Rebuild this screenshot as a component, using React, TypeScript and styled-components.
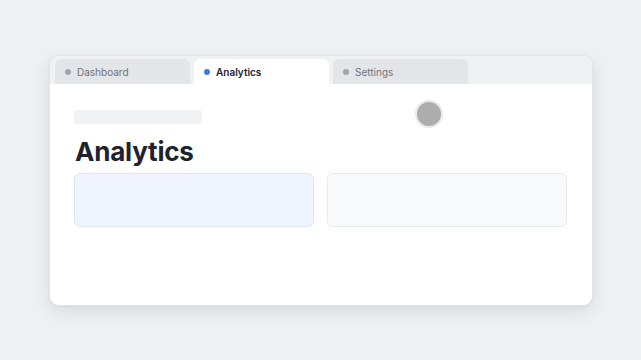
import styled, { createGlobalStyle } from 'styled-components'

const GlobalStyle = createGlobalStyle`
  html, body {
    margin: 0;
    padding: 0;
    background: #eff0f3;
  }
  body {
    font-family: 'Inter', 'Liberation Sans', sans-serif;
  }
`

const Page = styled.div`
  width: 641px;
  height: 360px;
  box-sizing: border-box;
  padding: 55px 0 0 49px;
  display: flex;
  align-items: flex-start;
`

const Window = styled.div`
  position: relative;
  width: 544px;
  height: 251px;
  background: #ffffff;
  border: 1px solid #e3e4e7;
  box-sizing: border-box;
  border-radius: 10px;
  box-shadow: 0 6px 18px rgba(20, 24, 40, 0.09), 0 1px 3px rgba(20, 24, 40, 0.05);
  overflow: hidden;
  display: flex;
  flex-direction: column;
`

const TabBar = styled.div`
  display: flex;
  gap: 4px;
  padding: 3px 6px 0 5px;
  background: #f0f1f3;
  height: 28px;
  box-sizing: border-box;
`

const Tab = styled.div<{ $active?: boolean }>`
  width: 135px;
  height: 25px;
  display: flex;
  align-items: center;
  gap: 6px;
  padding-left: 10px;
  box-sizing: border-box;
  border-radius: 6px 6px 0 0;
  background: ${(p) => (p.$active ? '#ffffff' : '#e4e5e8')};
  font-size: 10px;
  font-weight: ${(p) => (p.$active ? 600 : 400)};
  color: ${(p) => (p.$active ? '#1c2230' : '#70737b')};
`

const Dot = styled.span<{ $active?: boolean }>`
  width: 6px;
  height: 6px;
  border-radius: 50%;
  background: ${(p) => (p.$active ? '#3b7ddd' : '#a3a5aa')};
`

const Content = styled.div`
  padding: 26px 25px 0 24px;
  display: flex;
  flex-direction: column;
`

const Skeleton = styled.div`
  width: 128px;
  height: 14px;
  border-radius: 3px;
  background: #f1f2f4;
`

const Title = styled.h1`
  margin: 12px 0 5px 1px;
  font-size: 26px;
  line-height: 32px;
  font-weight: 700;
  color: #1e232d;
  letter-spacing: -0.2px;
`

const Cards = styled.div`
  display: grid;
  grid-template-columns: 240px 240px;
  gap: 13px;
`

const Card = styled.div<{ $tone: 'blue' | 'gray' }>`
  height: 54px;
  border-radius: 6px;
  box-sizing: border-box;
  background: ${(p) => (p.$tone === 'blue' ? '#eff4fe' : '#f8f9fa')};
  border: 1px solid ${(p) => (p.$tone === 'blue' ? '#dbe5f5' : '#eaebed')};
`

const Cursor = styled.div`
  position: absolute;
  left: 365px;
  top: 44px;
  width: 24px;
  height: 24px;
  border-radius: 50%;
  background: #adadad;
  border: 2px solid #e9e9e9;
  box-sizing: content-box;
`

export default function App() {
  const tabs = ['Dashboard', 'Analytics', 'Settings']
  return (
    <>
      <GlobalStyle />
      <Page>
        <Window>
          <TabBar>
            {tabs.map((t) => (
              <Tab key={t} $active={t === 'Analytics'}>
                <Dot $active={t === 'Analytics'} />
                {t}
              </Tab>
            ))}
          </TabBar>
          <Content>
            <Skeleton />
            <Title>Analytics</Title>
            <Cards>
              <Card $tone="blue" />
              <Card $tone="gray" />
            </Cards>
          </Content>
          <Cursor />
        </Window>
      </Page>
    </>
  )
}
